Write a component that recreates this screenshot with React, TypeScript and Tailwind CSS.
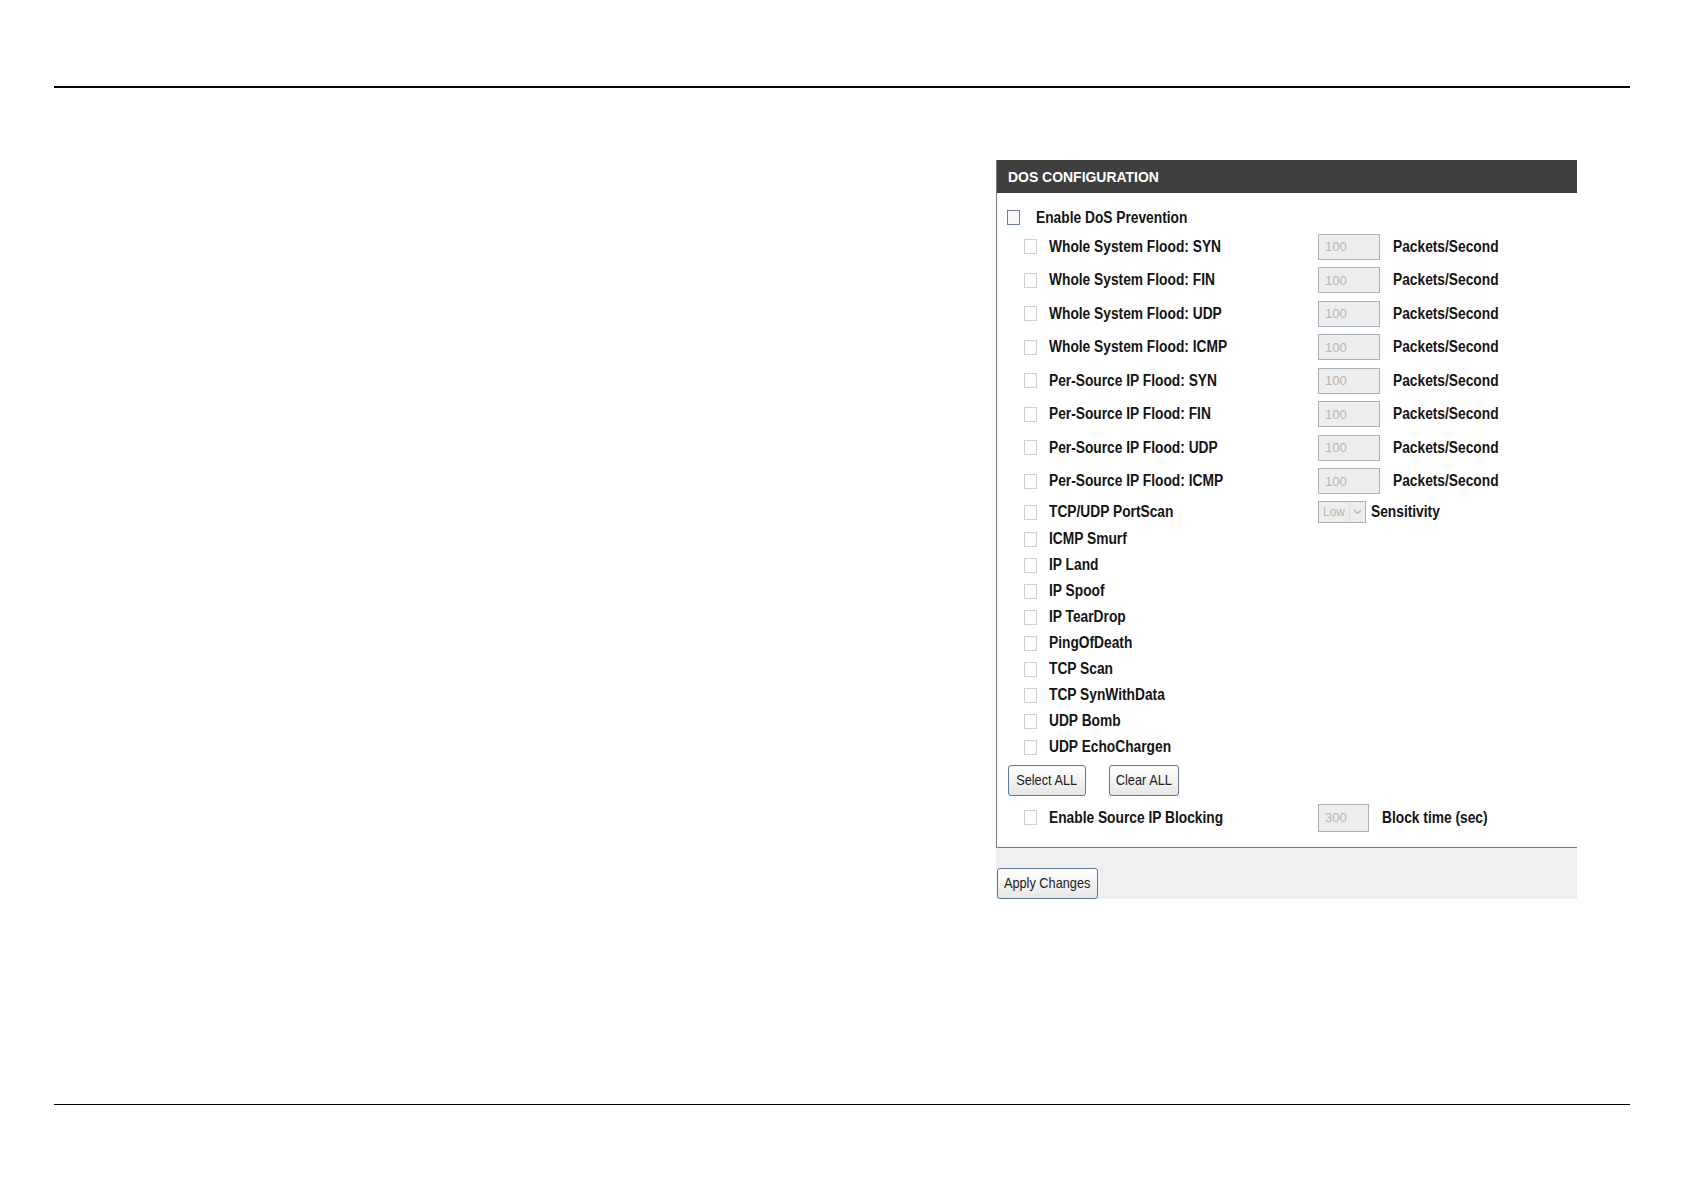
const font = { fontFamily: '"Liberation Sans", Arial, sans-serif' };

const floodRows = [
  "Whole System Flood: SYN",
  "Whole System Flood: FIN",
  "Whole System Flood: UDP",
  "Whole System Flood: ICMP",
  "Per-Source IP Flood: SYN",
  "Per-Source IP Flood: FIN",
  "Per-Source IP Flood: UDP",
  "Per-Source IP Flood: ICMP",
];

const plainRows = [
  "ICMP Smurf",
  "IP Land",
  "IP Spoof",
  "IP TearDrop",
  "PingOfDeath",
  "TCP Scan",
  "TCP SynWithData",
  "UDP Bomb",
  "UDP EchoChargen",
];

function Box() {
  return <span className="block w-[13px] h-[15px] border border-[#cfcfcf] bg-white shrink-0" />;
}

function Field({ value, w, h }: { value: string; w: string; h: string }) {
  return (
    <div className={`${w} ${h} border border-[#a9b1ba] bg-[#ededed] flex items-center pl-[6px] text-[13px] text-[#b5b5b5]`}>
      {value}
    </div>
  );
}

function Btn({ label, w }: { label: string; w: string }) {
  return (
    <button
      type="button"
      className={`${w} h-[31px] rounded-[3px] border border-[#5d7b98] bg-gradient-to-b from-white to-[#e6e6e6] text-[#222] flex items-center justify-center`}
    >
      <span className="inline-block whitespace-nowrap scale-x-[0.88] text-[14.5px]">{label}</span>
    </button>
  );
}

function Label({ text }: { text: string }) {
  return (
    <span className="inline-block whitespace-nowrap origin-left scale-x-[0.86] font-bold text-[16px] text-[#141414]">
      {text}
    </span>
  );
}

export default function App() {
  return (
    <div className="w-[1684px] h-[1191px] bg-white overflow-hidden" style={font}>
      <div className="pt-[86px] px-[54px]">
        <div className="h-[2px] bg-black" />
      </div>

      <div className="mt-[72px] ml-[996px] w-[581px]">
        <div className="border-l border-b border-[#7c7c7c]">
          <div className="h-[33px] bg-[#3f3f3f] flex items-center pl-[11px]">
            <span className="inline-block whitespace-nowrap origin-left scale-x-[0.9] text-white font-bold text-[15.5px]">
              DOS CONFIGURATION
            </span>
          </div>

          <div className="pt-[12px] pb-[15px]">
            <div className="h-[25px] flex items-center pl-[10px]">
              <span className="block w-[13px] h-[15px] border border-[#6d7f95] bg-[#f4f6f8] shrink-0" />
              <span className="ml-[16px]">
                <Label text="Enable DoS Prevention" />
              </span>
            </div>

            {floodRows.map((r) => (
              <div key={r} className="h-[33.5px] flex items-center pl-[27px]">
                <Box />
                <div className="ml-[12px] w-[269px]">
                  <Label text={r} />
                </div>
                <Field value="100" w="w-[62px]" h="h-[26px]" />
                <span className="ml-[13px]">
                  <Label text="Packets/Second" />
                </span>
              </div>
            ))}

            <div className="h-[28px] flex items-center pl-[27px]">
              <Box />
              <div className="ml-[12px] w-[269px]">
                <Label text="TCP/UDP PortScan" />
              </div>
              <div className="w-[48px] h-[22px] border border-[#a9b1ba] bg-[#ededed] flex items-center text-[12px] text-[#b5b5b5]">
                <span className="pl-[4px] flex-1">Low</span>
                <span className="w-[16px] h-full border-l border-[#dcdcdc] flex items-center justify-center">
                  <svg width="9" height="6" viewBox="0 0 9 6" fill="none">
                    <path d="M1 1l3.5 3.5L8 1" stroke="#b5b5b5" strokeWidth="1.3" />
                  </svg>
                </span>
              </div>
              <span className="ml-[5px]">
                <Label text="Sensitivity" />
              </span>
            </div>

            {plainRows.map((r) => (
              <div key={r} className="h-[26px] flex items-center pl-[27px]">
                <Box />
                <span className="ml-[12px]">
                  <Label text={r} />
                </span>
              </div>
            ))}

            <div className="mt-[5px] flex items-center pl-[11px] gap-[23px]">
              <Btn label="Select ALL" w="w-[78px]" />
              <Btn label="Clear ALL" w="w-[70px]" />
            </div>

            <div className="mt-[7px] h-[29px] flex items-center pl-[27px]">
              <Box />
              <div className="ml-[12px] w-[269px]">
                <Label text="Enable Source IP Blocking" />
              </div>
              <Field value="300" w="w-[51px]" h="h-[28px]" />
              <span className="ml-[13px]">
                <Label text="Block time (sec)" />
              </span>
            </div>
          </div>
        </div>

        <div className="bg-[#f0f0f0] pt-[20px] pl-[1px]">
          <Btn label="Apply Changes" w="w-[101px]" />
        </div>
      </div>

      <div className="mt-[205px] px-[54px]">
        <div className="h-px bg-black" />
      </div>
    </div>
  );
}
